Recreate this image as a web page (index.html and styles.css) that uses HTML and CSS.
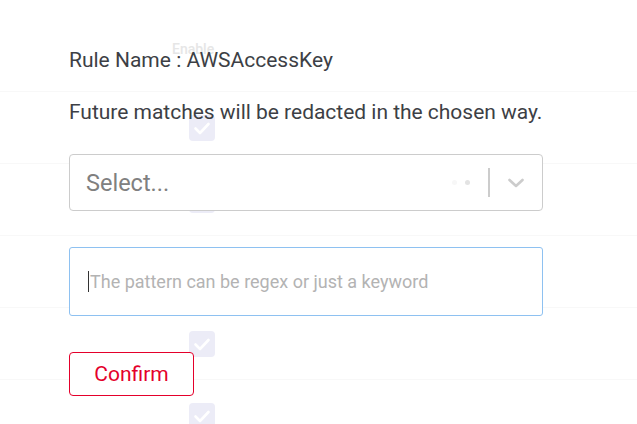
FILE: index.html
```html
<!DOCTYPE html>
<html>
<head>
<meta charset="utf-8">
<link rel="stylesheet" href="styles.css">
</head>
<body>
<div class="table">
  <div class="thead"><span class="th">Enable</span></div>
  <div class="row"><span class="cb"><svg viewBox="0 0 26 26"><path d="M6.5 13.5l4.5 4.5 8.5-9" fill="none" stroke="#fff" stroke-width="2.6" stroke-linecap="round" stroke-linejoin="round"/></svg></span></div>
  <div class="row"><span class="cb"><svg viewBox="0 0 26 26"><path d="M6.5 13.5l4.5 4.5 8.5-9" fill="none" stroke="#fff" stroke-width="2.6" stroke-linecap="round" stroke-linejoin="round"/></svg></span></div>
  <div class="row"><span class="cb"><svg viewBox="0 0 26 26"><path d="M6.5 13.5l4.5 4.5 8.5-9" fill="none" stroke="#fff" stroke-width="2.6" stroke-linecap="round" stroke-linejoin="round"/></svg></span></div>
  <div class="row"><span class="cb"><svg viewBox="0 0 26 26"><path d="M6.5 13.5l4.5 4.5 8.5-9" fill="none" stroke="#fff" stroke-width="2.6" stroke-linecap="round" stroke-linejoin="round"/></svg></span></div>
  <div class="row last"><span class="cb"><svg viewBox="0 0 26 26"><path d="M6.5 13.5l4.5 4.5 8.5-9" fill="none" stroke="#fff" stroke-width="2.6" stroke-linecap="round" stroke-linejoin="round"/></svg></span></div>
</div>

<div class="modal">
  <div class="title">Rule Name : AWSAccessKey</div>
  <div class="desc">Future matches will be redacted in the chosen way.</div>
  <div class="select">
    <span class="placeholder">Select...</span>
    <span class="dots"><i class="d1"></i><i class="d2"></i></span>
    <span class="sep"></span>
    <svg class="chev" viewBox="0 0 20 20"><path d="M3.5 7l6.5 6 6.5-6" fill="none" stroke="#cccccc" stroke-width="2.6" stroke-linecap="round" stroke-linejoin="round"/></svg>
  </div>
  <div class="input"><span class="caret"></span><span class="ph">The pattern can be regex or just a keyword</span></div>
  <div class="actions"><button class="confirm">Confirm</button></div>
</div>
</body>
</html>
```
FILE: styles.css
```css
html, body {
  margin: 0;
  padding: 0;
  background: #fff;
  font-family: Roboto, "Liberation Sans", sans-serif;
  width: 637px;
  height: 424px;
  overflow: hidden;
  position: relative;
}
.table {
  display: flex;
  flex-direction: column;
}
.thead {
  border-bottom: 1px solid #f8f8f8;
  padding-left: 172px;
  padding-top: 39px;
  box-sizing: border-box;
  height: 92px;
}
.th {
  font-size: 14px;
  color: #e6e6e6;
  font-weight: 500;
}
.row {
  height: 72px;
  box-sizing: border-box;
  border-bottom: 1px solid #f8f8f8;
  display: flex;
  align-items: center;
  padding-left: 189px;
}
.row.last { height: 60px; border-bottom: 0; align-items: flex-start; padding-top: 23px; }
.cb {
  width: 26px;
  height: 26px;
  border-radius: 4px;
  background: #ececf7;
  display: block;
  flex-shrink: 0;
}
.cb svg { width: 26px; height: 26px; display: block; }

.modal {
  position: absolute;
  left: 0;
  top: 0;
  padding: 48px 0 0 69px;
  width: 474px;
}
.title {
  font-size: 21px;
  line-height: 25px;
  color: #3d3f45;
  white-space: nowrap;
}
.desc {
  font-size: 21px;
  line-height: 25px;
  margin-top: 27px;
  color: #3d3f45;
  white-space: nowrap;
  letter-spacing: -0.02px;
}
.select {
  margin-top: 29px;
  height: 57px;
  box-sizing: border-box;
  border: 1px solid #cccccc;
  border-radius: 4px;
  background: #fff;
  display: flex;
  align-items: center;
  padding-left: 16px;
}
.placeholder {
  font-size: 23.5px;
  color: #808080;
  flex: 1;
}
.dots {
  display: flex;
  gap: 8px;
  margin-right: 18px;
}
.dots i {
  width: 5px;
  height: 5px;
  border-radius: 50%;
  display: block;
}
.d1 { background: #f7f7f7; }
.d2 { background: #e3e3e3; }
.sep {
  width: 2px;
  height: 29px;
  background: #cccccc;
}
.chev {
  width: 20px;
  height: 20px;
  margin: 0 16px 0 16px;
}
.input {
  margin-top: 36px;
  height: 69px;
  box-sizing: border-box;
  border: 1px solid #8ec1f1;
  border-radius: 3px;
  background: #fff;
  display: flex;
  align-items: center;
  padding-left: 18px;
}
.caret {
  width: 1px;
  height: 21px;
  background: #333;
  margin-right: 1px;
}
.ph {
  font-size: 18px;
  color: #b3b3b3;
}
.actions {
  margin-top: 36px;
  display: flex;
}
.confirm {
  width: 125px;
  height: 44px;
  border: 1px solid #e4002b;
  border-radius: 4px;
  background: #fff;
  color: #e4002b;
  font-family: Roboto, "Liberation Sans", sans-serif;
  font-size: 21px;
  padding: 0;
}
```
